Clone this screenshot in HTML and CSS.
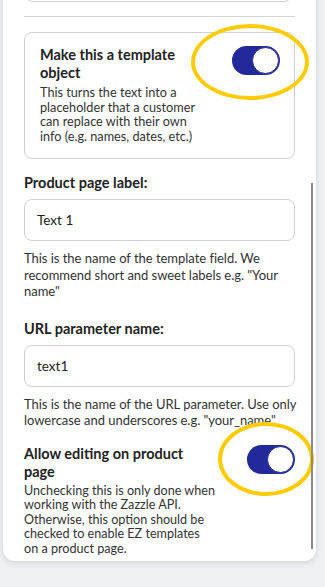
FILE: index.html
```html
<!DOCTYPE html>
<html>
<head>
<meta charset="utf-8">
<link rel="stylesheet" href="styles.css">
</head>
<body>
<div class="panel">
  <div class="prev-card"></div>
  <hr class="divider">
  <div class="tpl-card">
    <div class="tpl-text">
      <div class="title">Make this a template object</div>
      <div class="desc">This turns the text into a placeholder that a customer can replace with their own info (e.g. names, dates, etc.)</div>
    </div>
    <div class="toggle-wrap t1">
      <span class="toggle"><span class="knob"></span></span>
      <span class="ring"></span>
    </div>
  </div>

  <div class="field">
    <div class="label">Product page label:</div>
    <div class="input">Text 1</div>
    <div class="help">This is the name of the template field. We recommend short and sweet labels e.g. "Your name"</div>
  </div>

  <div class="field f2">
    <div class="label">URL parameter name:</div>
    <div class="input">text1</div>
    <div class="help">This is the name of the URL parameter. Use only lowercase and underscores e.g. "your_name"</div>
  </div>

  <div class="allow">
    <div class="allow-text">
      <div class="title">Allow editing on product page</div>
      <div class="desc wide">Unchecking this is only done when working with the Zazzle API. Otherwise, this option should be checked to enable EZ templates on a product page.</div>
    </div>
    <div class="toggle-wrap t2">
      <span class="toggle"><span class="knob"></span></span>
      <span class="ring"></span>
    </div>
  </div>
  <div class="scrollbar"></div>
</div>
</body>
</html>
```
FILE: styles.css
```css
* { box-sizing: border-box; }
html, body { margin: 0; padding: 0; }
body {
  background: #eef0f3;
  font-family: Lato, "Open Sans", sans-serif;
  color: #333;
  width: 325px;
  height: 587px;
  overflow: hidden;
}
.panel {
  position: relative;
  margin: 0 9px 0 3px;
  height: 571px;
  background: #fff;
  border-radius: 0 0 12px 12px;
  box-shadow: 0 2px 6px rgba(0,0,0,0.12);
  padding: 0 21px;
}
.prev-card {
  height: 12px;
  margin: -10px 3px 0 1px;
  border: 1px solid #cfcfcf;
  border-radius: 0 0 8px 8px;
}
.divider {
  margin: 14px 0 0;
  border: 0;
  border-top: 1px solid #d3d3d3;
  height: 0;
}
.tpl-card {
  margin-top: 15px;
  border: 1px solid #cfcfcf;
  border-radius: 8px;
  padding: 13px 14px 15px 15px;
  display: flex;
  justify-content: space-between;
  align-items: flex-start;
}
.tpl-text { width: 165px; }
.title {
  font-weight: 700;
  font-size: 14.5px;
  line-height: 18px;
  color: #222;
}
.desc {
  margin-top: 3px;
  font-size: 12.7px;
  line-height: 14.5px;
  color: #333;
}
.desc.wide { margin-right: -3px; font-size: 12.6px; }
.toggle-wrap { position: relative; flex: none; }
.toggle {
  display: block;
  width: 48px;
  height: 29px;
  border-radius: 15px;
  background: #22299b;
  position: relative;
}
.knob {
  position: absolute;
  right: 1px;
  top: 1px;
  width: 27px;
  height: 27px;
  border-radius: 50%;
  background: #fff;
  border: 1.5px solid #22299b;
}
.ring {
  position: absolute;
  border: 4px solid #ffcb05;
  border-radius: 50%;
}
.t1 .ring { left: -41px; top: -22px; width: 118px; height: 76px; }
.t2 .ring { left: -29px; top: -23px; width: 96px; height: 74px; }
.field { margin-top: 15px; }
.f2 { margin-top: 20px; }
.label {
  font-weight: 700;
  font-size: 14.5px;
  line-height: 18px;
  color: #222;
}
.input {
  margin-top: 7px;
  height: 42px;
  border: 1px solid #cfcfcf;
  border-radius: 8px;
  padding: 0 12px;
  font-size: 13.5px;
  line-height: 40px;
  color: #222;
}
.help {
  margin-top: 9px;
  margin-right: -5px;
  font-size: 13px;
  letter-spacing: -0.03px;
  line-height: 16.5px;
  color: #333;
}
.allow {
  margin-top: 16px;
  display: flex;
  justify-content: space-between;
  align-items: flex-start;
}
.allow-text { width: 190px; }
.scrollbar {
  position: absolute;
  left: 308px;
  top: 193px;
  width: 2px;
  height: 366px;
  background: #8a8a8a;
}
```
